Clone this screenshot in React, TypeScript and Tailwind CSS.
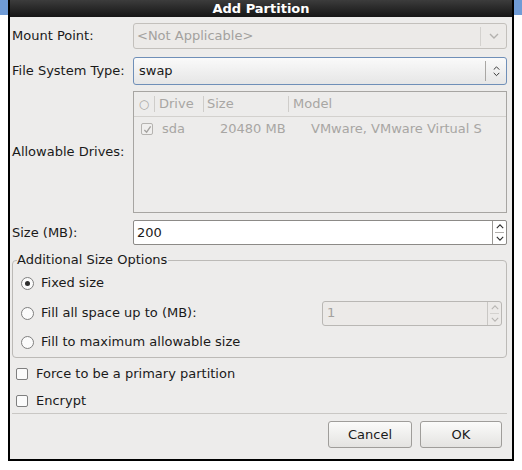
import React from "react";

const font = { fontFamily: '"DejaVu Sans", "Liberation Sans", sans-serif' };

function Chevron({ dir, color, size = 9 }: { dir: "up" | "down"; color: string; size?: number }) {
  return (
    <svg width={size} height={size / 2 + 1} viewBox="0 0 10 6" fill="none">
      {dir === "down" ? (
        <path d="M1 1 L5 5 L9 1" stroke={color} strokeWidth="1.4" />
      ) : (
        <path d="M1 5 L5 1 L9 5" stroke={color} strokeWidth="1.4" />
      )}
    </svg>
  );
}

function Check({ checked, disabled }: { checked?: boolean; disabled?: boolean }) {
  return (
    <span
      className={`flex h-[12px] w-[12px] items-center justify-center rounded-[2px] border ${
        disabled ? "border-[#b5b3b0] bg-[#f0efee]" : "border-[#7f7f7f] bg-[#fbfbfb]"
      }`}
    >
      {checked && (
        <svg width="9" height="9" viewBox="0 0 10 10" fill="none">
          <path d="M1.5 5.5 L4 8 L8.5 1.5" stroke={disabled ? "#a5a3a0" : "#333"} strokeWidth="1.5" />
        </svg>
      )}
    </span>
  );
}

function Radio({ checked }: { checked?: boolean }) {
  return (
    <span className="flex h-[13px] w-[13px] items-center justify-center rounded-full border border-[#7f7f7f] bg-[#fbfbfb]">
      {checked && <span className="h-[5px] w-[5px] rounded-full bg-[#2e2e2e]" />}
    </span>
  );
}

function SpinButtons({ disabled }: { disabled?: boolean }) {
  const c = disabled ? "#b8b6b3" : "#2e2e2e";
  return (
    <div
      className={`flex w-[14px] flex-col self-stretch border-l ${
        disabled ? "border-[#c9c7c4]" : "border-[#9a9895]"
      }`}
    >
      <div className="flex flex-1 items-center justify-center">
        <Chevron dir="up" color={c} size={8} />
      </div>
      <div className={`mx-[2px] h-px ${disabled ? "bg-[#d4d2cf]" : "bg-[#b0aeab]"}`} />
      <div className="flex flex-1 items-center justify-center">
        <Chevron dir="down" color={c} size={8} />
      </div>
    </div>
  );
}

export default function App() {
  return (
    <div className="flex w-[522px] h-[470px] bg-white text-[13px] text-[#1a1a1a]" style={font}>
      <div className="w-[8px]">
        <div className="h-[15px] bg-[#6f9bd6]" />
      </div>
      <div className="flex h-[461px] w-[506px] flex-col border-x-2 border-b-2 border-black bg-[#edeceb]">
        <div className="flex h-[17px] items-center justify-center bg-gradient-to-b from-[#3c3c3c] to-[#161616] text-[13px] font-bold leading-none text-white">
          Add Partition
        </div>
        <div className="flex flex-1 flex-col pl-[2px] pr-[5px]">
          {/* Mount Point */}
          <div className="mt-[6px] flex h-[26px] items-center">
            <div className="w-[121px]">Mount Point:</div>
            <div className="flex h-[26px] flex-1 items-center rounded-[3px] border border-[#c3c0bc] bg-[#eceae8]">
              <div className="flex-1 pl-[3px] text-[#a3a19e]">&lt;Not Applicable&gt;</div>
              <div className="flex h-[19px] w-[26px] items-center justify-center border-l border-[#d3d1ce]">
                <Chevron dir="down" color="#b3b1ae" size={10} />
              </div>
            </div>
          </div>
          {/* File System Type */}
          <div className="mt-[8px] flex h-[28px] items-center">
            <div className="w-[121px]">File System Type:</div>
            <div className="flex h-[28px] flex-1 items-center rounded-[3px] border border-[#6f8fb8] bg-gradient-to-b from-[#fafafa] to-[#e6e6e6]">
              <div className="flex-1 pl-[5px]">swap</div>
              <div className="flex h-[20px] w-[21px] flex-col items-center justify-center gap-[2px] border-l border-[#a9a7a4]">
                <Chevron dir="up" color="#333" size={7} />
                <Chevron dir="down" color="#333" size={7} />
              </div>
            </div>
          </div>
          {/* Allowable drives */}
          <div className="mt-[6px] flex h-[122px] items-center">
            <div className="w-[121px]">Allowable Drives:</div>
            <div className="flex h-full flex-1 flex-col border border-[#a7a5a2] bg-[#edeceb] text-[#a8a6a3]">
              <div className="flex h-[25px] items-center border-b border-[#d3d1ce]">
                <div className="flex w-[20px] items-center justify-center text-[12px]">○</div>
                <div className="h-[16px] w-px bg-[#cfcdca]" />
                <div className="w-[48px] pl-[4px]">Drive</div>
                <div className="h-[16px] w-px bg-[#cfcdca]" />
                <div className="w-[84px] pl-[3px]">Size</div>
                <div className="h-[16px] w-px bg-[#cfcdca]" />
                <div className="pl-[4px]">Model</div>
              </div>
              <div className="flex h-[24px] items-center">
                <div className="flex w-[24px] items-center justify-center pl-[2px]">
                  <Check checked disabled />
                </div>
                <div className="w-[62px] pl-[4px]">sda</div>
                <div className="w-[91px]">20480 MB</div>
                <div className="whitespace-nowrap">VMware, VMware Virtual S</div>
              </div>
            </div>
          </div>
          {/* Size */}
          <div className="mt-[7px] flex h-[25px] items-center">
            <div className="w-[121px]">Size (MB):</div>
            <div className="flex h-[25px] flex-1 items-center rounded-[2px] border border-[#8c8a87] bg-white">
              <div className="flex-1 pl-[3px]">200</div>
              <SpinButtons />
            </div>
          </div>
          {/* Additional Size Options */}
          <div className="relative mt-[15px] h-[98px] rounded-[4px] border border-[#bcbab7]">
            <div className="absolute left-[4px] top-[-9px] bg-[#edeceb] pr-[1px] leading-[16px]">
              Additional Size Options
            </div>
            <div className="flex flex-col pl-[8px] pt-[13px]">
              <div className="flex h-[18px] items-center gap-[7px]">
                <Radio checked />
                <span>Fixed size</span>
              </div>
              <div className="mt-[12px] flex h-[18px] items-center gap-[7px]">
                <Radio />
                <span className="flex-1">Fill all space up to (MB):</span>
                <div className="mr-[4px] flex h-[25px] w-[180px] items-center rounded-[3px] border border-[#b9b7b4] bg-[#eceae8]">
                  <div className="flex-1 pl-[4px] text-[#a3a19e]">1</div>
                  <SpinButtons disabled />
                </div>
              </div>
              <div className="mt-[11px] flex h-[18px] items-center gap-[7px]">
                <Radio />
                <span>Fill to maximum allowable size</span>
              </div>
            </div>
          </div>
          {/* Checkboxes */}
          <div className="mt-[7px] flex h-[18px] items-center gap-[8px] pl-[4px]">
            <Check />
            <span>Force to be a primary partition</span>
          </div>
          <div className="mt-[9px] flex h-[18px] items-center gap-[8px] pl-[4px]">
            <Check />
            <span>Encrypt</span>
          </div>
          <div className="mt-[3px] h-px bg-[#c9c7c4]" />
          <div className="mt-[7px] flex justify-end gap-[8px] pr-[5px]">
            <button className="h-[27px] w-[84px] rounded-[3px] border border-[#9f9d9a] bg-gradient-to-b from-[#fbfbfa] to-[#e4e3e1] text-[13px] text-[#1a1a1a]">
              Cancel
            </button>
            <button className="h-[27px] w-[82px] rounded-[3px] border border-[#9f9d9a] bg-gradient-to-b from-[#fbfbfa] to-[#e4e3e1] text-[13px] text-[#1a1a1a]">
              OK
            </button>
          </div>
        </div>
      </div>
      <div className="w-[8px]">
        <div className="h-[15px] bg-[#6f9bd6]" />
      </div>
    </div>
  );
}
